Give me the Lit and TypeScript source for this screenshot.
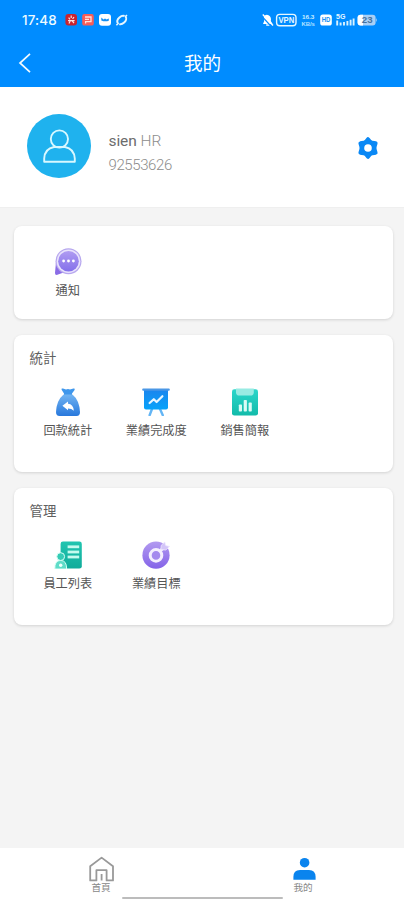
import { LitElement, html, css, svg, TemplateResult } from "lit";
import { customElement, property } from "lit/decorators.js";

const art: Record<string, TemplateResult> = {
  notice: svg`
    <defs><linearGradient id="g" x1="0" y1="0" x2="0" y2="1"><stop offset="0" stop-color="#b09cf2"/><stop offset="1" stop-color="#8470ea"/></linearGradient></defs>
    <path d="M2 14 L1 25 Q1 27.4 3.4 26.8 L11 24Z" fill="#8a6ce6"/>
    <circle cx="14.5" cy="13.2" r="13" fill="#b7a7ee"/>
    <circle cx="14.5" cy="13.2" r="11.8" fill="#e9e3fc"/>
    <circle cx="14.5" cy="13.2" r="10.3" fill="url(#g)"/>
    <g fill="#fff"><circle cx="9.6" cy="13" r="1.4"/><circle cx="14.5" cy="13" r="1.4"/><circle cx="19.4" cy="13" r="1.4"/></g>`,
  bag: svg`
    <defs><linearGradient id="g" x1="0" y1="0" x2="0" y2="1"><stop offset="0" stop-color="#72b4f2"/><stop offset="1" stop-color="#2878dc"/></linearGradient></defs>
    <path d="M7.6 1.8Q7 .2 9 .6L12 1.4Q14 .4 16 1.4L19.4.6Q21.4 .4 20.6 2L18 5.6V8H10V5.6Z" fill="#3f97ec"/>
    <path d="M9.6 6.4H18.4Q25.4 12 26 24Q26 28 22.5 28H5.5Q2 28 2 24Q2.6 12 9.6 6.4Z" fill="url(#g)"/>
    <path d="M8.4 17.8L14 13.6V15.8Q19.4 16.2 19.8 22.8Q17.6 20.4 14 20.4V22.2Z" fill="#fff"/>`,
  board: svg`
    <defs><linearGradient id="g" x1="0" y1="0" x2="0" y2="1"><stop offset="0" stop-color="#1b86ee"/><stop offset="1" stop-color="#06a3fa"/></linearGradient></defs>
    <path d="M10 21L7.6 27.2M18 21L20.8 27.2" stroke="#63b5f5" stroke-width="2.4" stroke-linecap="round"/>
    <path d="M2 2H26V19.5Q26 21.5 24 21.5H4Q2 21.5 2 19.5Z" fill="url(#g)"/>
    <rect x=".2" y=".4" width="27.6" height="2.4" rx="1" fill="#4a97e6"/>
    <path d="M7.6 15L11.8 11.2L14.6 14L20.4 8.2" fill="none" stroke="#e8f6ff" stroke-width="2.2" stroke-linecap="round" stroke-linejoin="round"/>`,
  report: svg`
    <defs><linearGradient id="g" x1="0" y1="0" x2="0" y2="1"><stop offset="0" stop-color="#2bd6ca"/><stop offset="1" stop-color="#12bbaa"/></linearGradient></defs>
    <rect x="1" y="1.2" width="26" height="26.4" rx="2.4" fill="url(#g)"/>
    <path d="M5 .4H22.8V4.2Q22.8 7.6 19.4 7.6H8.4Q5 7.6 5 4.2Z" fill="#98ebe3"/>
    <g fill="#d9fbf5"><rect x="7.8" y="16.4" width="3.2" height="7.2" rx=".8"/><rect x="12.7" y="12" width="3.2" height="11.6" rx=".8"/><rect x="17.6" y="14.6" width="3.2" height="9" rx=".8"/></g>`,
  staff: svg`
    <defs><linearGradient id="g" x1="0" y1="0" x2="0" y2="1"><stop offset="0" stop-color="#20c5b0"/><stop offset="1" stop-color="#11ab9a"/></linearGradient></defs>
    <rect x="6.6" y=".6" width="21.2" height="27" rx="2.4" fill="url(#g)"/>
    <g fill="#c5faee"><rect x="13.6" y="4.4" width="11.6" height="2.8"/><rect x="13.6" y="9.6" width="11.6" height="2.8"/><rect x="13.6" y="14.6" width="11.6" height="2.8"/></g>
    <path d="M.8 28Q.4 19.4 6.6 19.4T12.6 28Z" fill="#5fdcc8" stroke="#d8fff6" stroke-width="1"/>
    <circle cx="6.7" cy="15.6" r="3.9" fill="#35cbb5" stroke="#d8fff6" stroke-width="1"/>
    <circle cx="6.7" cy="24.2" r="1.7" fill="#effffb"/>`,
  target: svg`
    <defs><linearGradient id="g" x1="0" y1="0" x2="0" y2="1"><stop offset="0" stop-color="#b29af0"/><stop offset="1" stop-color="#8463e8"/></linearGradient></defs>
    <circle cx="14" cy="14.2" r="13.6" fill="url(#g)"/>
    <circle cx="14" cy="14.4" r="5.8" fill="#a58aee" stroke="#f4effe" stroke-width="3"/>
    <path d="M17.6 10.8L21.6 6.6" stroke="#f4effe" stroke-width="3"/>
    <path d="M18.8 8.6L19.2 4.4L22.8 1L23.6 4.6L27.6 5.4L23.8 9Z" fill="#d3c5f8" stroke="#efe8ff" stroke-width=".8"/>`,
};

@customElement("menu-entry")
export class MenuEntry extends LitElement {
  @property() icon = "";
  @property() label = "";
  static styles = css`
    :host { display: flex; flex-direction: column; align-items: center; width: 88.5px; }
    svg { width: 28px; height: 28px; display: block; }
    span { margin-top: 6px; font-size: 12.2px; line-height: 18px; color: #555; white-space: nowrap; }
  `;
  render() {
    return html`<svg viewBox="0 0 28 28">${art[this.icon]}</svg><span>${this.label}</span>`;
  }
}

interface Section { title: string; items: [string, string][] }

const sections: Section[] = [
  { title: "", items: [["notice", "通知"]] },
  { title: "統計", items: [["bag", "回款統計"], ["board", "業績完成度"], ["report", "銷售簡報"]] },
  { title: "管理", items: [["staff", "員工列表"], ["target", "業績目標"]] },
];

@customElement("app-root")
export class AppRoot extends LitElement {
  static styles = css`
    :host {
      display: flex; flex-direction: column; height: 900px; box-sizing: border-box;
      background: #f4f4f4; overflow: hidden;
      font-family: Roboto, "Noto Sans CJK TC", sans-serif;
    }
    header { height: 87px; background: #008cff; color: #fff; flex: none; }
    .status { display: flex; align-items: center; height: 39px; padding: 0 26px 0 22px; }
    .time { font: 500 13.4px/16px Inter, sans-serif; width: 43px; white-space: nowrap; letter-spacing: 0.15px; color: #eefbff; }
    .status svg { display: block; height: 16px; }
    .grow { flex: 1; }
    .bar { display: grid; grid-template-columns: 48px 1fr 48px; align-items: center; height: 48px; }
    .back { width: 14px; height: 22px; margin-left: 18px; display: block; }
    h1 { margin: 0; font-size: 18.6px; line-height: 28px; font-weight: 400; text-align: center; padding: 1px 0 0 1px; }
    .profile { display: flex; align-items: center; height: 121px; background: #fff; padding: 0 25px 0 27px; flex: none; border-bottom: 1px solid #efefef; box-sizing: border-box; }
    .avatar { width: 64px; height: 64px; margin-top: -2px; flex: none; }
    .who { flex: 1; margin: 13px 0 0 17.5px; color: #8c8c8c; font-weight: 300; }
    .name { font-size: 15.5px; line-height: 24px; }
    .name b { font-weight: 400; color: #6c6c6c; letter-spacing: -0.1px; }
    .number { font-size: 15px; line-height: 25px; letter-spacing: -0.4px; }
    .gear { width: 22px; height: 24px; margin-top: 1px; }
    main { flex: 1; padding: 18px 11px 0 14px; display: flex; flex-direction: column; gap: 16px; }
    .card { background: #fff; border-radius: 8px; height: 137px; box-sizing: border-box; box-shadow: 0 1px 3px rgba(0, 0, 0, 0.14); padding: 14px 9.5px 0; }
    .card.short { height: 93px; padding-top: 22px; }
    h2 { margin: 0 0 19px 6px; font-size: 13.4px; line-height: 20px; font-weight: 400; color: #606060; }
    .row { display: flex; }
    nav { height: 52px; background: #fff; display: grid; grid-template-columns: 1fr 1fr; position: relative; flex: none; }
    .tab { display: flex; flex-direction: column; align-items: center; padding-top: 7px; font-size: 9.6px; line-height: 12px; color: #888; }
    .tab svg { width: 28px; height: 27px; display: block; }
    .handle { position: absolute; left: 122px; top: 49px; width: 161px; height: 2px; background: #bcbcbc; border-radius: 1px; }
    text { font-family: "Liberation Sans", sans-serif; font-weight: 700; }
  `;

  render() {
    return html`
      <header>
        <div class="status">
          <span class="time">17:48</span>
          <svg width="64" viewBox="0 0 64 16">
            <rect x="0.4" y="2" width="11.6" height="11.6" rx="3" fill="#c9232f" />
            <path d="M6.2 3.4V6M3.6 5.6L5 7.4M9 5L7.6 7M3 8.6H9.6M4 11.4L5.4 8.6M7 8.6L9 11.2" fill="none" stroke="#ffe3e3" stroke-width="1.2" />
            <rect x="17.2" y="2" width="11.6" height="11.6" rx="2.2" fill="#f65c58" />
            <path d="M20 5H26V9.6H20.6V11.4M20 7.4H24" fill="none" stroke="#ffe2dc" stroke-width="1.3" />
            <rect x="34" y="2" width="12" height="11.8" rx="3" fill="#fff" />
            <path d="M36.3 5.6L38.5 7.4L40 6.6L41.5 7.6L43.8 6.6V8.8Q40 10 36.3 8.4Z" fill="#168ff2" />
            <ellipse cx="56.8" cy="8" rx="5" ry="3.5" transform="rotate(-42 56.8 8)" fill="none" stroke="#e4f5ff" stroke-width="2" stroke-dasharray="11.6 1.8" />
            <path d="M51.4 13.2L53.6 11M60 4.8L62 3" stroke="#e4f5ff" stroke-width="1.6" />
          </svg>
          <span class="grow"></span>
          <svg width="117" viewBox="0 0 117 16">
            <path d="M2.8 5Q4.6 1.6 8 3.4Q10.6 5 9.8 9L11.6 12H2L3.2 9Z" fill="#fff" />
            <path d="M5.2 13H8.8" stroke="#fff" stroke-width="1.5" />
            <path d="M.8 4.2L9.8 14" stroke="#008cff" stroke-width="1.2" /><path d="M1.8 2.6L12 13.4" stroke="#fff" stroke-width="1.4" />
            <rect x="15.6" y="2.4" width="19.4" height="11.4" rx="3.2" fill="none" stroke="#e6f7ff" stroke-width="1.4" />
            <text x="17.4" y="11.3" font-size="8.6" textLength="15.8" lengthAdjust="spacingAndGlyphs" fill="#e6f7ff">VPN</text>
            <text x="41" y="7" font-size="6" textLength="12.4" lengthAdjust="spacingAndGlyphs" fill="#c9ecff">16.3</text>
            <text x="40.4" y="14" font-size="5.6" textLength="13.4" lengthAdjust="spacingAndGlyphs" fill="#b4e2ff">KB/s</text>
            <rect x="59.2" y="2.4" width="11.6" height="11.2" rx="2.6" fill="#fff" />
            <text x="60.7" y="10.4" font-size="6.6" textLength="8.6" lengthAdjust="spacingAndGlyphs" fill="#168ff2">HD</text>
            <text x="75" y="7.2" font-size="7.4" textLength="9.4" lengthAdjust="spacingAndGlyphs" fill="#e6f7ff">5G</text>
            <path d="M76.2 8.4V13.4M79.6 10.4V13.4M83 10V13.4M86.4 9V13.4M89.6 7.8V13.4M92.6 6.4V13.4" stroke="#d8f1ff" stroke-width="1.9" />
            <rect x="96.6" y="2.8" width="18" height="10.6" rx="3" fill="#a9cff5" />
            <path d="M99.6 2.8H102V13.4H99.6Q96.6 13.4 96.6 10.4V5.8Q96.6 2.8 99.6 2.8Z" fill="#fff" />
            <path d="M115 6Q116.8 8 115 10.2Z" fill="#a9cff5" />
            <text x="100.8" y="11.2" font-size="8.6" textLength="10.8" lengthAdjust="spacingAndGlyphs" fill="#47739f">23</text>
          </svg>
        </div>
        <div class="bar">
          <svg class="back" viewBox="0 0 14 22"><path d="M12 1.8L2 11L12 20.2" fill="none" stroke="#f2faff" stroke-width="1.7" /></svg>
          <h1>我的</h1>
        </div>
      </header>
      <section class="profile">
        <svg class="avatar" viewBox="0 0 64 64">
          <circle cx="32" cy="32" r="32" fill="#1fb2ee" />
          <g fill="none" stroke="#d8f8ff" stroke-width="1.9">
            <circle cx="32.4" cy="25" r="8.6" />
            <path d="M17.2 47.7V44.5Q17.8 34.6 27 33H38Q47 34.6 47.8 44.5V47.7Z" stroke-linejoin="round" />
          </g>
        </svg>
        <div class="who">
          <div class="name"><b>sien</b> HR</div>
          <div class="number">92553626</div>
        </div>
        <svg class="gear" viewBox="0 0 22 24">
          <circle cx="11" cy="12" r="8.3" fill="#0a88f5" />
          <path d="M11 3.2L13.6 6.4L18.6 7.3L17.2 12L18.6 16.7L13.6 17.6L11 20.8L8.4 17.6L3.4 16.7L4.8 12L3.4 7.3L8.4 6.4Z" fill="#0a88f5" stroke="#0a88f5" stroke-width="4" stroke-linejoin="round" />
          <circle cx="11" cy="12" r="3.8" fill="#fff" />
        </svg>
      </section>
      <main>
        ${sections.map((s) => html`
          <section class="card ${s.title ? "" : "short"}">
            ${s.title ? html`<h2>${s.title}</h2>` : ""}
            <div class="row">
              ${s.items.map(([icon, label]) => html`<menu-entry .icon=${icon} .label=${label}></menu-entry>`)}
            </div>
          </section>`)}
      </main>
      <nav>
        <div class="tab">
          <svg viewBox="0 0 28 27"><path d="M14.6 2.6L3.2 11.2V25.4H9.4V15.2H19.6V25.4H26V11.2ZM14.6 19V25.6" fill="none" stroke="#999" stroke-width="1.8" stroke-linejoin="round" /></svg>
          首頁
        </div>
        <div class="tab">
          <svg viewBox="0 0 28 27"><circle cx="15.6" cy="7.7" r="4.8" fill="#0a84ee" /><path d="M4.4 24.8V22Q4.4 15 11 15H20Q26.6 15 26.6 22V24.8Z" fill="#0a84ee" /></svg>
          我的
        </div>
        <span class="handle"></span>
      </nav>
    `;
  }
}
